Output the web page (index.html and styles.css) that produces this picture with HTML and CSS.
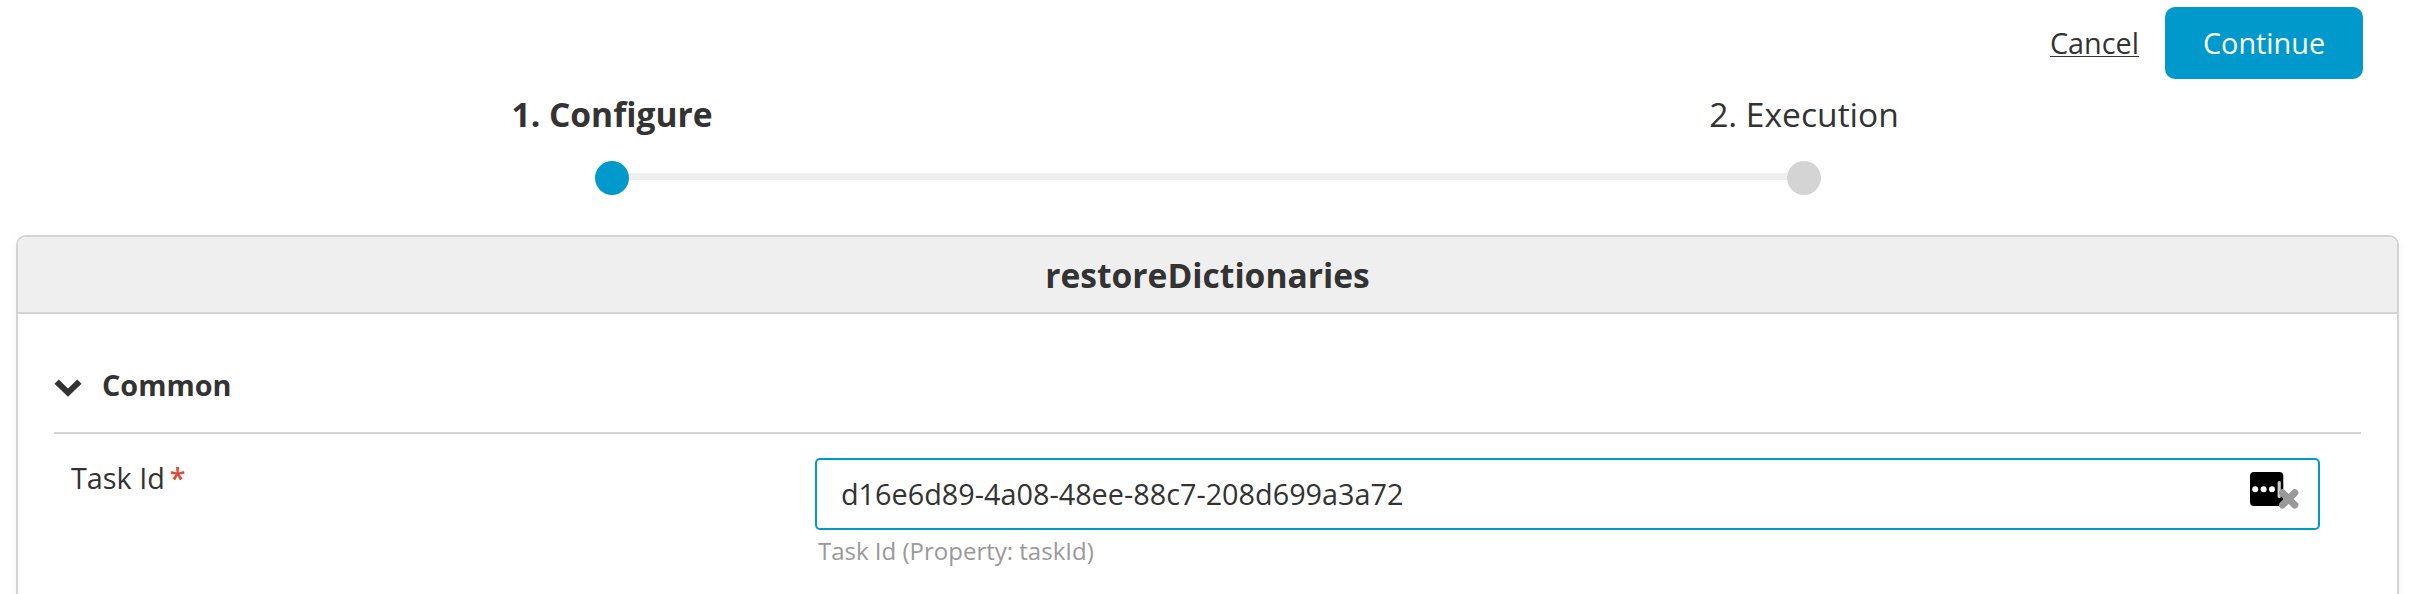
FILE: index.html
```html
<!DOCTYPE html>
<html lang="en">
<head>
<meta charset="utf-8">
<title>restoreDictionaries</title>
<link rel="stylesheet" href="styles.css">
</head>
<body>
<div class="page">
  <header class="actions">
    <a class="cancel">Cancel</a>
    <button class="continue" type="button">Continue</button>
  </header>
  <nav class="steps">
    <div class="step step-active"><span class="step-label">1. Configure</span><div class="track"><i></i><b class="dot"></b><i class="bar"></i></div></div>
    <div class="step"><span class="step-label">2. Execution</span><div class="track"><i class="bar"></i><b class="dot"></b><i></i></div></div>
  </nav>
  <main class="panel">
    <h1 class="panel-title">restoreDictionaries</h1>
    <section class="panel-body">
      <h2 class="section-title">
        <svg class="chevron" viewBox="0 0 28 18"><path d="M4.700 0.600L14 9.400 23.300 0.600 27.500 4.800 14 17.800 0.500 4.800z"/></svg>
        <span>Common</span>
      </h2>
      <div class="row">
        <div class="label">Task Id<span class="required">*</span></div>
        <div class="field">
          <div class="input">
            <span class="value">d16e6d89-4a08-48ee-88c7-208d699a3a72</span>
            <svg class="tools" viewBox="0 0 50 38">
              <rect x="0" y="0" width="33.300" height="34" rx="4"/>
              <g fill="#fff"><circle cx="5.200" cy="17.300" r="3"/><circle cx="13.600" cy="17.300" r="3"/><circle cx="22" cy="17.300" r="3"/></g>
              <rect x="27.600" y="9" width="3.200" height="17" rx="1.500" fill="#ccc"/>
              <path d="M32.500 20.800L44.800 33M44.800 20.800L32.500 33" stroke="#999" stroke-width="7" stroke-linecap="round"/>
            </svg>
          </div>
          <div class="hint">Task Id (Property: taskId)</div>
        </div>
      </div>
    </section>
  </main>
</div>
</body>
</html>
```
FILE: styles.css
```css
* { box-sizing: border-box; }
body { margin: 0; background: #fff; color: #333; font-family: "Open Sans", sans-serif; font-size: 28.8px; }
.page { height: 594px; overflow: hidden; padding: 7px 18px 0 16px; }
.actions { display: flex; justify-content: flex-end; align-items: center; gap: 26px; height: 72px; padding-right: 37px; }
.cancel { line-height: 72px; text-decoration: underline; text-decoration-thickness: 1px; text-underline-offset: 2px; }
.continue { width: 198px; height: 72px; padding: 0; border: 0; border-radius: 10px; background: #0099cc; color: #fff; font: 28.8px/72px "Open Sans", sans-serif; }
.steps { display: flex; width: 2384px; height: 156px; padding-top: 12px; }
.step { flex: 1; text-align: center; font-size: 33.6px; }
.step-label { display: block; line-height: 46px; }
.step-active .step-label { font-weight: 700; }
.track { display: flex; align-items: center; height: 34px; margin-top: 24px; }
.track i { flex: 1; height: 7px; margin-top: -3px; }
.track .bar { background: #efefef; }
.dot { width: 34px; height: 34px; border-radius: 50%; background: #d4d4d4; }
.step-active .dot { background: #0099cc; }
.panel { width: 2383px; height: 500px; border: 2px solid #d4d4d4; border-radius: 10px; background: #fff; overflow: hidden; box-shadow: 0 2px 8px rgba(0, 0, 0, .05); }
.panel-title { margin: 0; height: 77px; border-bottom: 2px solid #d4d4d4; background: #efefef; font-size: 33.6px; line-height: 77px; text-align: center; }
.panel-body { padding: 22px 36px 0; }
.section-title { display: flex; align-items: center; gap: 20px; height: 98px; margin: 0; border-bottom: 2px solid #d4d4d4; font-size: 28.8px; line-height: 98px; }
.section-title span { padding-top: 1px; }
.chevron { width: 28px; height: 18px; margin-top: 8px; fill: #333; }
.row { display: flex; padding: 24px 41px 0 17px; }
.label { width: 744px; padding-top: 2px; line-height: 36px; }
.required { color: #dd4b39; font-weight: 600; margin-left: 5px; }
.field { flex: 1; }
.input { display: flex; align-items: center; justify-content: space-between; height: 72px; padding: 0 18px 0 24px; border: 2px solid #0099cc; border-radius: 5px; }
.value { padding-bottom: 2px; }
.tools { width: 50px; height: 38px; margin-top: -6px; fill: #000; }
.hint { padding: 1px 0 0 3px; color: #999; font-size: 24px; line-height: 40px; }
```
